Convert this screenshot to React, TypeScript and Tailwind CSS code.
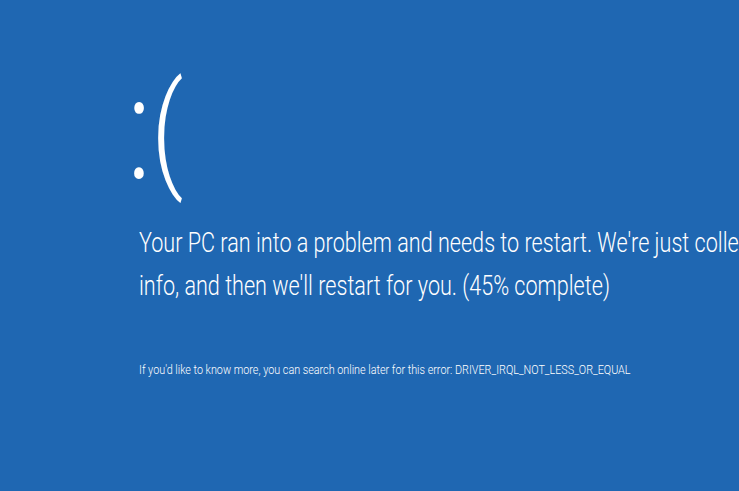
export default function App() {
  return (
    <div className="h-[491px] w-[739px] overflow-hidden bg-[#1f67b2] text-white font-['Roboto',sans-serif] font-light">
      <div className="pt-[57px] pl-[127px]">
        <div className="flex items-baseline whitespace-nowrap leading-none origin-left scale-x-[0.8]">
          <span className="text-[144px]">:</span>
          <span className="text-[126px] -translate-y-[4px]">(</span>
        </div>
      </div>
      <div className="pl-[139px] pt-[21px] whitespace-nowrap">
        <p className="text-[27px] leading-[43px] origin-left scale-x-[0.8]">Your PC ran into a problem and needs to restart. We're just collecting some error</p>
        <p className="text-[27px] leading-[43px] origin-left scale-x-[0.8]">info, and then we'll restart for you. (45% complete)</p>
        <p className="mt-[54px] text-[12px] leading-[16px] origin-left scale-x-[0.9]">If you'd like to know more, you can search online later for this error: DRIVER_IRQL_NOT_LESS_OR_EQUAL</p>
      </div>
    </div>
  );
}
